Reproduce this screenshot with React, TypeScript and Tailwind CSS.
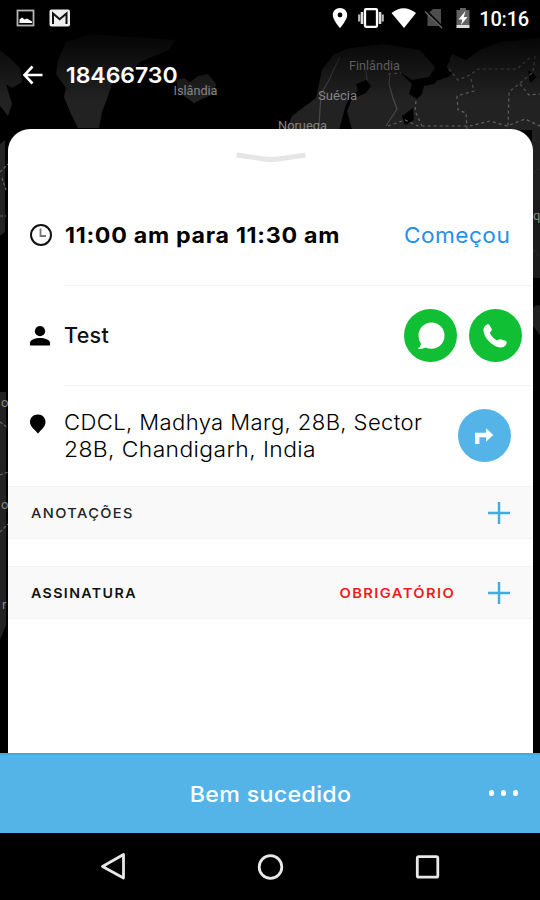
import React from "react";

function MapBackdrop() {
  return (
    <svg className="absolute inset-0" width="540" height="900" viewBox="0 0 540 900" fill="none">
      <defs>
        <linearGradient id="fade" x1="0" y1="0" x2="0" y2="1">
          <stop offset="0" stopColor="#000" />
          <stop offset="0.28" stopColor="#000" stopOpacity="0.95" />
          <stop offset="1" stopColor="#000" stopOpacity="0" />
        </linearGradient>
      </defs>
      <rect width="540" height="900" fill="#000" />
      <g fill="#222">
        <path d="M58 60 L66 42 L90 34 L176 40 L168 50 L140 62 L128 74 L112 84 L108 96 L102 112 L99 128 L78 128 L70 112 L64 97 L66 88 L56 74Z" />
        <path d="M0 50 L10 58 L20 68 L22 82 L12 88 L6 84 L12 104 L8 116 L0 106Z" />
        <path d="M176 80 L184 78 L190 82 L198 76 L208 74 L216 84 L214 94 L204 98 L194 103 L184 96 L178 90Z" />
        <path d="M286 130 L292 116 L316 98 L322 70 L334 54 L350 48 L384 44 L420 50 L434 66 L437 76 L440 80 L446 76 L452 74 L446 66 L452 54 L466 60 L480 50 L500 42 L540 38 V200 H532 V130Z" />
        <path d="M0 144 L5 140 V232 L0 236Z M0 392 H6 V625 L0 640Z" />
      </g>
      <path d="M345 108 L350 95 L358 91 L356 84 L366 80 L371 86 L366 93 L352 99 L347 111 L352 130 L339 130Z" fill="#000" />
      <path d="M400 72 L412 80 L429 77 L436 66 L440 56 L446 52 L450 60 L446 68 L451 76 L438 80 L434 84 L424 86 L422 94 L417 99 L409 94 L412 84Z M528 70 L537 77 L530 83Z M402 116 L413 108 L414 120 L405 125Z" fill="#000" />
      <g stroke="#626262" strokeWidth="1.2">
        <path d="M340 57 L334 69 L329 80 L321 94 L319 126 M366 70 L367 80 M390 73 L389 84 L393 98 L397 109 L386 126" stroke="#484848" />
        <path d="M388 74 L401 73 M416 101 L415 111 L422 126 M449 69 L458 80 L470 75 L478 69 H517 L532 56 M471 79 L474 91 L457 96 L458 110 L466 113 L467 129 M535 56 L533 72 L519 84 L509 92 L508 126 M520 84 L529 95 L540 94 M388 126 L405 120 L418 126 H470 L490 121 L507 126 L525 119 L540 126" strokeDasharray="3 3" />
        <path d="M0 172 L8 164 M0 216 H6 M2 178 L6 190 M533 140 L540 142 M534 172 L540 169 M533 250 L540 257 M0 422 L8 428 M0 532 L8 524 M0 475 L8 472" strokeDasharray="3 2" />
      </g>
      <path d="M533 128 H540 V278 H533Z" fill="#202020" opacity="0.85" />
      <path d="M533 308 Q537 303 540 306 V335 L533 326Z" fill="#202020" />
      <rect width="540" height="100" fill="url(#fade)" />
      <g fill="#858585" fontSize="13" fontFamily="Roboto, sans-serif">
        <text x="173.500" y="94.500" textLength="44" lengthAdjust="spacingAndGlyphs">Islândia</text>
        <text x="349" y="70" textLength="51" fill="#5c5c5c" lengthAdjust="spacingAndGlyphs">Finlândia</text>
        <text x="318" y="99.500" textLength="39" lengthAdjust="spacingAndGlyphs">Suécia</text>
        <text x="278" y="129.500" textLength="49" lengthAdjust="spacingAndGlyphs">Noruega</text>
        <text x="533" y="220">q</text>
        <text x="1" y="407">o</text>
        <text x="1" y="509">o</text>
        <text x="2" y="609">r</text>
      </g>
    </svg>
  );
}

function StatusBar() {
  return (
    <div className="flex h-9 shrink-0 items-center justify-between pr-[11px] pl-4">
      <svg width="56" height="20" viewBox="16 8 56 20" fill="none">
        <rect x="17.500" y="10.500" width="16" height="15" stroke="#b5b5b5" strokeWidth="1.800" />
        <path d="M19.500 23 V19.500 L22 17.500 L24.500 19.500 L27 18.500 L32 21.500 V23Z" fill="#fff" />
        <rect x="49.500" y="9.500" width="20.500" height="17" rx="2" fill="#eee" />
        <path d="M53 24 V13.500 L59.700 19.200 L66.500 13.500 V24" stroke="#111" strokeWidth="2" />
      </svg>
      <div className="flex items-center">
        <svg width="148" height="24" viewBox="331 6 148 24" fill="none">
          <path fillRule="evenodd" d="M340 8 C335.800 8 332.800 11 332.800 15 C332.800 20 340 28 340 28 S347.200 20 347.200 15 C347.200 11 344.200 8 340 8Z M340 12.600 A2.400 2.400 0 1 1 340 17.400 A2.400 2.400 0 1 1 340 12.600Z" fill="#fff" />
          <rect x="365" y="9.200" width="12" height="17.600" rx="1" stroke="#fff" strokeWidth="2.300" />
          <path d="M362 12 V24 M380 12 V24" stroke="#ddd" strokeWidth="2.600" />
          <path d="M359.200 14.500 V21.500 M382.700 14.500 V21.500" stroke="#bbb" strokeWidth="2.200" />
          <path d="M391.500 13 Q403.500 3.500 416 13 L404 28Z" fill="#fff" />
          <path d="M427.500 14 L433 9 H441 V26 H427.500Z" fill="#4d4d4d" />
          <path d="M426 11 L443 28" stroke="#000" strokeWidth="2.600" />
          <path d="M425 11.500 L442 28" stroke="#686868" strokeWidth="1.400" />
          <path d="M456.500 10 H460 V8 H466 V10 H469.500 V25 H456.500Z" fill="#626262" />
          <path d="M456.500 25 H469.500 V28 H456.500Z" fill="#ddd" />
          <path d="M465.500 11 L458.500 19.500 H462.300 L461 25 L467.500 17 H463.800Z" fill="#fff" />
        </svg>
        <span className="w-[50px] pt-[2px] text-right font-[Roboto,sans-serif] text-[20px] leading-none font-medium tracking-[-0.2px] text-white">10:16</span>
      </div>
    </div>
  );
}

function AppBar() {
  return (
    <header className="flex h-[93px] shrink-0 items-start pt-[27px] pl-[22px]">
      <svg className="mt-[2px]" width="22" height="20" viewBox="0 0 22 20" fill="none">
        <path d="M10.500 1.500 L2.500 10 L10.500 18.500 M2.500 10 H20.500" stroke="#fff" strokeWidth="2.600" />
      </svg>
      <h1 className="ml-[22px] origin-left scale-x-[1.047] text-[22px] leading-6 font-semibold tracking-[-0.06px] text-white">18466730</h1>
    </header>
  );
}

function Plus() {
  return (
    <svg width="22" height="22" viewBox="0 0 22 22" fill="none">
      <path d="M11 0 V22 M0 11 H22" stroke="#3fade0" strokeWidth="2.400" />
    </svg>
  );
}

function Sheet() {
  return (
    <main className="ml-[8px] flex h-[624px] w-[525px] shrink-0 flex-col rounded-t-[22px] bg-white">
      <div className="flex h-[56px] justify-center pt-[22px]">
        <svg width="70" height="12" viewBox="0 0 70 12" fill="none">
          <path d="M0.500 4 L28 8 Q35 9 42 8 L69.500 4" stroke="#e6e6e6" strokeWidth="5" />
        </svg>
      </div>

      <section className="flex h-[100px] items-center pr-[23px] pl-[21px]">
        <svg width="24" height="24" viewBox="0 0 24 24" fill="none">
          <circle cx="12" cy="12" r="10" stroke="#111" strokeWidth="2" />
          <path d="M11.500 5.500 V13 H17" stroke="#777" strokeWidth="1.800" />
        </svg>
        <span className="ml-[12px] origin-left scale-x-[1.079] text-[21.500px] font-bold tracking-[0.65px] whitespace-nowrap text-black">11:00 am para 11:30 am</span>
        <span className="ml-auto origin-right scale-x-[1.03] text-[22px] tracking-[0.45px] text-[#2490ea]">Começou</span>
      </section>

      <section className="ml-[56px] h-px shrink-0 bg-[#f4f4f4]" />

      <section className="flex h-[99px] items-center pr-[11.500px] pl-[21px]">
        <svg width="22" height="22" viewBox="0 0 22 22" fill="#000">
          <circle cx="11" cy="6.200" r="5.100" />
          <path d="M1 20.500 V18 C1 14.500 6.500 13 11 13 S21 14.500 21 18 V20.500Z" />
        </svg>
        <span className="ml-[13px] text-[21.500px] font-medium tracking-[0.3px] text-[#111]">Test</span>
        <div className="ml-auto flex gap-[11.500px]">
          <button className="flex size-[53px] items-center justify-center rounded-full bg-[#10bf33]">
            <svg width="28" height="28" viewBox="0 0 28 28" fill="#fff">
              <path d="M14.500 0.500 A13 13 0 0 1 27.500 13.500 C27.500 21 22 26.800 14.500 26.800 Q11.500 26.800 8.500 25.500 Q5 27.500 0.800 26.800 Q3.500 25.200 4 22 Q1.500 18.500 1.500 13.500 A13 13 0 0 1 14.500 0.500Z" />
            </svg>
          </button>
          <button className="flex size-[53px] items-center justify-center rounded-full bg-[#10bf33]">
            <svg width="24" height="24" viewBox="0 0 24 24" fill="#fff">
              <path d="M2.800 1.200 L4.500 0.300 Q5.800 0 6.400 1 L8.700 4.800 Q9.200 6 8.200 6.900 L6.700 8.700 Q9 13.500 14.200 16.600 L16.400 15.500 Q17.400 15.100 18.400 15.500 L22.700 16.900 Q24 17.500 23.700 18.700 L22.700 21.200 Q20.800 23.700 17 23.500 C8.500 22 0.800 13.500 0.400 6 Q0.300 2.800 2.800 1.200Z" />
            </svg>
          </button>
        </div>
      </section>

      <section className="ml-[56px] h-px shrink-0 bg-[#f4f4f4]" />

      <section className="flex h-[100px] items-center pr-[22.500px] pl-[21px]">
        <svg className="mb-[24px]" width="18" height="20" viewBox="0 0 18 20" fill="#000">
          <path d="M9 0.500 C4 0.500 1 4 1 8 C1 12.500 6 16 9 19.500 C12 16 16.500 12.500 16.500 8 C16.500 4 13.500 0.500 9 0.500Z" />
        </svg>
        <p className="ml-[17px] flex flex-col items-start text-[21.500px] leading-[27.500px] font-light tracking-[0.38px] whitespace-nowrap text-black">
          <span className="origin-left scale-x-[1.026]">CDCL, Madhya Marg, 28B, Sector</span>
          <span className="origin-left scale-x-[1.063]">28B, Chandigarh, India</span>
        </p>
        <button className="mb-px ml-auto flex size-[53px] items-center justify-center rounded-full bg-[#54b4e7]">
          <svg width="20" height="18" viewBox="0 0 20 18" fill="none">
            <path d="M3.200 17 V8 H13" stroke="#fff" strokeWidth="4.400" />
            <path d="M12 1.200 L19.300 8 L12 14.800Z" fill="#fff" />
          </svg>
        </button>
      </section>

      <section className="flex h-[53px] items-center border-y border-[#f4f4f4] bg-[#f9f9f9] pr-[23px] pl-[23px]">
        <span className="origin-left scale-x-[1.08] pt-[2px] text-[13.500px] font-medium tracking-[1.3px] text-[#222]">ANOTAÇÕES</span>
        <span className="ml-auto"><Plus /></span>
      </section>

      <section className="mt-[27px] flex h-[53px] items-center border-y border-[#f4f4f4] bg-[#f9f9f9] pr-[23px] pl-[23px]">
        <span className="origin-left scale-x-[1.055] pt-[2px] text-[13.500px] font-semibold tracking-[1.3px] text-[#111]">ASSINATURA</span>
        <span className="mr-[33px] ml-auto origin-right scale-x-[1.09] pt-[2px] text-[13.500px] font-semibold tracking-[1.3px] text-[#ed1c1c]">OBRIGATÓRIO</span>
        <Plus />
      </section>
    </main>
  );
}

function BottomBar() {
  return (
    <footer className="grid h-[80px] shrink-0 grid-cols-[1fr_auto_1fr] items-center border-t-2 border-[#43a9d9] bg-[#54b4e7]">
      <span className="col-start-2 ml-px scale-x-[1.055] text-[22px] font-medium tracking-[0.3px] text-white">Bem sucedido</span>
      <div className="mr-[22px] mb-[2px] flex gap-[6.500px] justify-self-end">
        <i className="size-[5.500px] rounded-full bg-white" />
        <i className="size-[5.500px] rounded-full bg-white" />
        <i className="size-[5.500px] rounded-full bg-white" />
      </div>
    </footer>
  );
}

function NavBar() {
  return (
    <nav className="h-[67px] shrink-0 bg-black">
      <svg width="540" height="67" viewBox="0 833 540 67" fill="none" stroke="#e8e8e8" strokeWidth="2.800">
        <path d="M102.500 866.500 L123.500 854.500 V878Z" strokeLinejoin="round" />
        <circle cx="270.500" cy="867" r="11.300" />
        <rect x="417.300" y="856.700" width="20.500" height="20.500" rx="1.500" />
      </svg>
    </nav>
  );
}

export default function App() {
  return (
    <div className="relative h-[900px] w-[540px] overflow-hidden bg-black font-[Inter,sans-serif]">
      <MapBackdrop />
      <div className="relative flex h-full flex-col">
        <StatusBar />
        <AppBar />
        <Sheet />
        <BottomBar />
        <NavBar />
      </div>
    </div>
  );
}
